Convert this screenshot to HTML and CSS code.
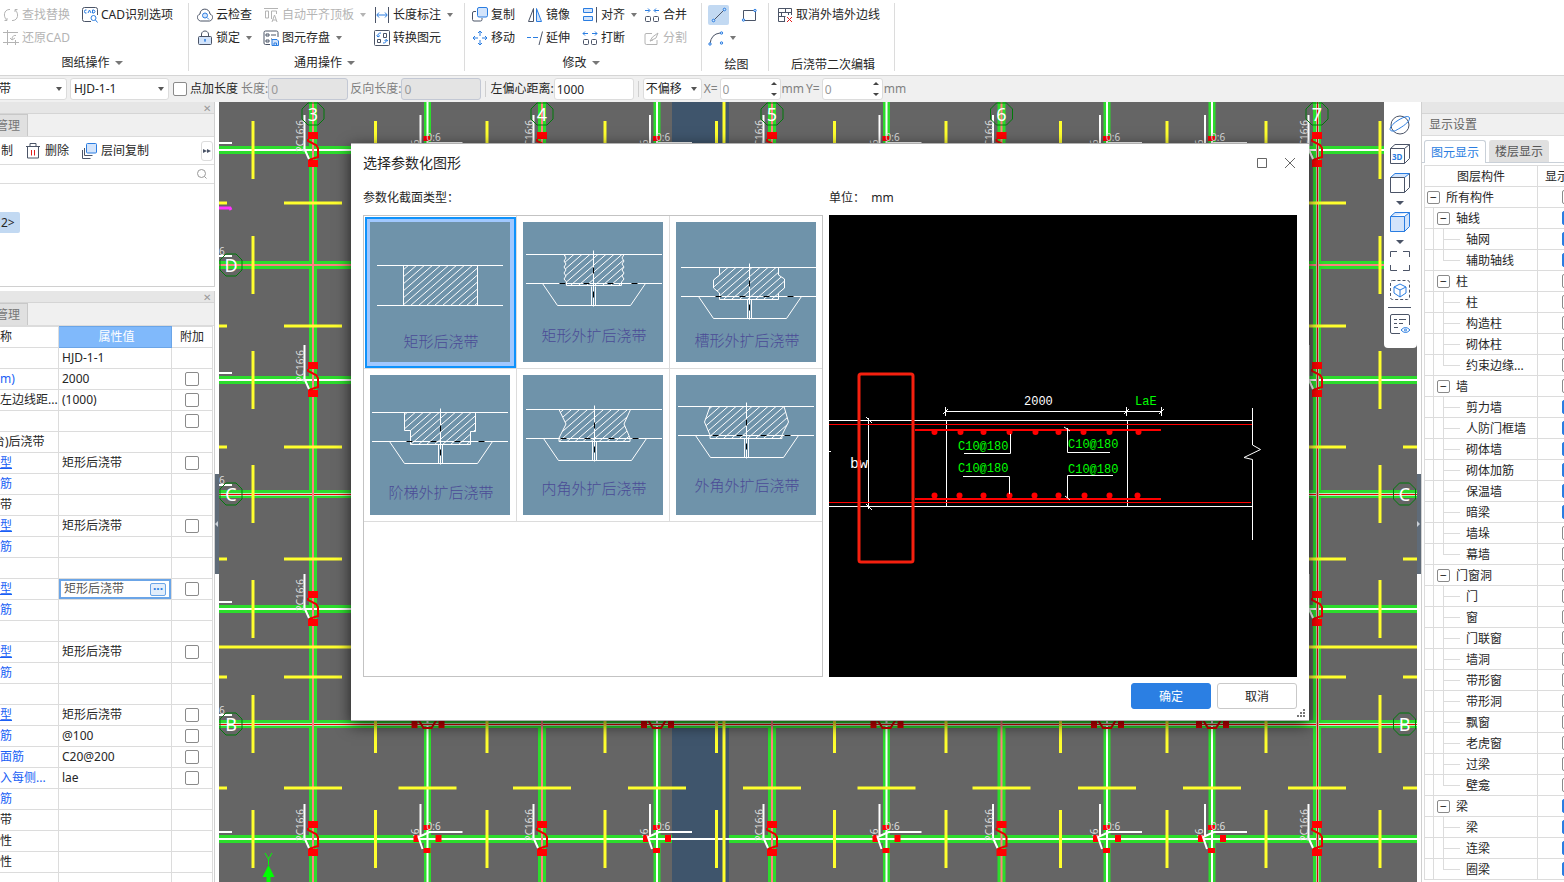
FILE: index.html
```
<!DOCTYPE html>
<html lang="zh-CN">
<head>
  <meta charset="UTF-8" />
  <meta name="viewport" content="width=device-width, initial-scale=1.0" />
  <title>选择参数化图形</title>
  <link rel="stylesheet" href="styles.css">
</head>
<body>
  <!-- icon sprite -->
  <svg class="sprite" aria-hidden="true">
    <symbol id="i-replace" viewBox="0 0 16 16"><path d="M6 2.500C1 3 0 9 3.500 13M1.500 13.500H4V11M10 13.500C15 13 16 7 12.500 3M14.500 2.500H12V5M6 2.500h1M9 13.500h1" /></symbol>
    <symbol id="i-restore" viewBox="0 0 16 16"><path d="M4.500 0v15M0 2.500h15M0 12.500h16M12.500 10v5M13 5.500C10 5 9 7 9 10M7 8l2 2 3-2" /></symbol>
    <symbol id="i-cad" viewBox="0 0 16 16"><path d="M9 14.500H2.500Q.5 14.500.5 12.500V2.500Q.5.5 2.500.5h11Q15.500.5 15.500 2.500V8" /><path class="b" d="M4.500 3H3Q2 4.500 3 6h1.500M6 6l1.500-3L9 6M10.500 3v3h1.500q2-1.500 0-3z" /><circle class="b" cx="11.500" cy="11" r="2.500" /><path class="b" d="M13.500 13l2 2.500" /></symbol>
    <symbol id="i-cloud" viewBox="0 0 16 16"><path d="M3.500 14C-.5 13-.5 8 3 7 3 .5 12.500.5 13 7c3.500 1 3.500 6-.5 7z" /><circle class="f" cx="8" cy="8.500" r="2.500" /><path class="b" d="M10 10.500l2 2" /></symbol>
    <symbol id="i-lock" viewBox="0 0 16 16"><rect x="1.500" y="6.500" width="13" height="8" rx="1" fill="#d3e4fb" /><path d="M4.500 6V4C5 0 11 0 11.500 4V6" /><path class="b" d="M8 9v3M7 10h2" /></symbol>
    <symbol id="i-align-top" viewBox="0 0 16 16"><path d="M1 1.500h14M2.500 4h3v7h-3zM8.500 12V4h5v3M9 15l2.500-7L14 15M10 13h3" /></symbol>
    <symbol id="i-save" viewBox="0 0 16 16"><path d="M7 14.500H2.500Q1 14.500 1 13V2.500Q1 1 2.500 1H13.500Q15 1 15 2.500V7M3 4h3v2H3zM3 10h3v2H3zM8 5h5M8 9h1" /><path class="f" d="M9 9.500h5l1.500 1.500v4.500H9zM11 15v-2h2.500v2" /></symbol>
    <symbol id="i-length" viewBox="0 0 16 16"><path d="M1.500 0v16M14.500 0v16" /><path class="b" d="M3 8h10M5 5.500L2.800 8 5 10.500M11 5.500L13.200 8 11 10.500" /></symbol>
    <symbol id="i-convert" viewBox="0 0 16 16"><rect x=".5" y=".5" width="15" height="15" rx="1" /><path d="M9.500 3.500h3v4h-3zM3.500 9.500h3v3h-3z" /><path class="b" d="M7 3Q3 3 4 7M2.500 5.500L4 7l2-1.500M9 13q4 0 3-3.500M10.500 11l1.500-1.500L14 11" /></symbol>
    <symbol id="i-copy" viewBox="0 0 16 16"><path d="M4 4.500H2Q.5 4.500.5 6v6.500Q.5 14 2 14H8.500Q10 14 10 12.500V11" /><rect class="f" x="5.500" y=".5" width="10" height="9.500" rx="1.500" /></symbol>
    <symbol id="i-mirror" viewBox="0 0 16 16"><path d="M6.500 1.500v13h-5z" /><path class="f" d="M9.500 1.500v13h5z" /></symbol>
    <symbol id="i-align" viewBox="0 0 16 16"><path class="f" d="M1.500 1.500h9v4h-9zM1.500 9.500h9v4h-9z" /><path d="M14.500 0v15.500" /></symbol>
    <symbol id="i-merge" viewBox="0 0 16 16"><rect x="1.500" y="9.500" width="5" height="5" rx="1" /><rect x="9.500" y="9.500" width="5" height="5" rx="1" /><path class="b" d="M1 3.500h4.500M4 1.500l2 2-2 2M15 3.500h-4.500M12 1.500l-2 2 2 2" /></symbol>
    <symbol id="i-break" viewBox="0 0 16 16"><rect x="1.500" y="9.500" width="5" height="5" rx="1" /><rect x="9.500" y="9.500" width="5" height="5" rx="1" /><path class="b" d="M6 3.500H1M3 1.500l-2 2 2 2M10 3.500h5M13 1.500l2 2-2 2" /></symbol>
    <symbol id="i-move" viewBox="0 0 16 16"><path class="b" d="M8 1v5M8 10v5M1 8h5M10 8h5M6 3l2-2 2 2M6 13l2 2 2-2M3 6L1 8l2 2M13 6l2 2-2 2" /></symbol>
    <symbol id="i-extend" viewBox="0 0 16 16"><path class="b" d="M0 7.500h4M6 7.500h5" /><path d="M15.500 1.500L12 15" /></symbol>
    <symbol id="i-split" viewBox="0 0 16 16"><path d="M8 3.500H2Q1 3.500 1 5v8q0 1.500 1.500 1.500H13V10M6 11l2.500-4L14 3 12 8zM6 11l3-1" /></symbol>
    <symbol id="i-line" viewBox="0 0 16 16"><path d="M3 13L13 3" /><circle class="f" cx="2.500" cy="13.500" r="1.300" /><circle class="f" cx="13.500" cy="2.500" r="1.300" /></symbol>
    <symbol id="i-rect" viewBox="0 0 16 16"><path d="M2.500 3.500h12v10h-12z" /><circle class="f" cx="14" cy="3.500" r="1.200" /><circle class="f" cx="2.500" cy="13" r="1.200" /></symbol>
    <symbol id="i-arc" viewBox="0 0 16 16"><path d="M2 14Q3 4 12 3" /><circle class="f" cx="2" cy="14" r="1.200" /><circle class="f" cx="13.500" cy="3" r="1.200" /><circle class="f" cx="13.500" cy="13" r="1.200" /></symbol>
    <symbol id="i-wall" viewBox="0 0 16 16"><path d="M8 14.500H1.500v-13h13V8M1.500 5.500h13M1.500 9.500h7M8.500 1.500v4M4.500 5.500v4M11.500 5.500V8M7.500 10v4" /><path class="r" d="M10 10l5 5M15 10l-5 5" /></symbol>
    <symbol id="i-trash" viewBox="0 0 16 16"><path d="M1 3.500h14M5 3.500V.5h6v3M2.500 4v11h11V4" /><path class="r" d="M6.500 7v5.500M9.500 7v5.500" /></symbol>
    <symbol id="i-layers" viewBox="0 0 16 16"><path d="M3.500 5v7.500h8M1.500 7v8.500h8" /><rect class="f" x="5.500" y=".5" width="10" height="9.500" rx="1" /></symbol>
    <symbol id="i-search" viewBox="0 0 12 12"><circle cx="5.500" cy="5.500" r="4" /><path d="M8.500 8.500l2 2" /></symbol>
    <symbol id="i-orbit" viewBox="0 0 22 22"><circle cx="11" cy="11" r="9" /><path class="b" d="M4 17C-2 17 2 11 8 7S20 1 20.500 4 16 11 11 14 6 17 4 17z" /></symbol>
    <symbol id="i-3d" viewBox="0 0 22 22"><path d="M1.500 5.500h14v15h-14zM1.500 5.500L6 1.500h14.500L15.500 5.500M20.500 1.500v14l-5 5" /><text x="3" y="17" class="cube-text">3D</text></symbol>
    <symbol id="i-cube" viewBox="0 0 22 22"><path class="f" d="M1.500 5.500L6 1.500h14.500L15.500 5.500z" /><path d="M1.500 5.500h14v15h-14zM20.500 1.500v14l-5 5" /></symbol>
    <symbol id="i-solid" viewBox="0 0 22 22"><path class="f" d="M1.500 5.500h14v15h-14zM1.500 5.500L6 1.500h14.500v14l-5 5v-15l5-4" /></symbol>
    <symbol id="i-frame" viewBox="0 0 22 22"><path d="M1.500 7V1.500H8M14 1.500h6.500V7M20.500 15v5.500H14M8 20.500H1.500V15" /></symbol>
    <symbol id="i-select3d" viewBox="0 0 22 22"><rect x="1.500" y="1.500" width="19" height="19" rx="2" stroke-dasharray="3 2" /><path class="b" d="M11 5l6 3v6l-6 4-6-4V8zM5 8l6 3 6-3M11 11v7" /></symbol>
    <symbol id="i-list" viewBox="0 0 22 22"><path d="M11 20.500H3Q1.500 20.500 1.500 19V3Q1.500 1.500 3 1.500h16q1.500 0 1.500 1.500v9M5 6.500h3M10 6.500h7M5 10.500h3M10 10.500h4M5 14.500h4" /><path class="b" d="M12 17q4.500-5 9 0-4.500 5-9 0z" /><circle class="b" cx="16.500" cy="17" r="1" /></symbol>
  </svg>

  <header class="ribbon">
    <section class="group g-drawing">
      <div class="tools">
        <button class="tool" disabled><svg class="icon"><use href="#i-replace" /></svg>查找替换</button>
        <button class="tool"><svg class="icon"><use href="#i-cad" /></svg>CAD识别选项</button>
        <button class="tool" disabled><svg class="icon"><use href="#i-restore" /></svg>还原CAD</button>
      </div>
      <button class="group-name caret">图纸操作</button>
    </section>
    <section class="group g-common">
      <div class="tools">
        <button class="tool"><svg class="icon"><use href="#i-cloud" /></svg>云检查</button>
        <button class="tool caret" disabled><svg class="icon"><use href="#i-align-top" /></svg>自动平齐顶板</button>
        <button class="tool caret"><svg class="icon"><use href="#i-length" /></svg>长度标注</button>
        <button class="tool caret"><svg class="icon"><use href="#i-lock" /></svg>锁定</button>
        <button class="tool caret"><svg class="icon"><use href="#i-save" /></svg>图元存盘</button>
        <button class="tool"><svg class="icon"><use href="#i-convert" /></svg>转换图元</button>
      </div>
      <button class="group-name caret">通用操作</button>
    </section>
    <section class="group g-modify">
      <div class="tools">
        <button class="tool"><svg class="icon"><use href="#i-copy" /></svg>复制</button>
        <button class="tool"><svg class="icon"><use href="#i-mirror" /></svg>镜像</button>
        <button class="tool caret"><svg class="icon"><use href="#i-align" /></svg>对齐</button>
        <button class="tool"><svg class="icon"><use href="#i-merge" /></svg>合并</button>
        <button class="tool"><svg class="icon"><use href="#i-move" /></svg>移动</button>
        <button class="tool"><svg class="icon"><use href="#i-extend" /></svg>延伸</button>
        <button class="tool"><svg class="icon"><use href="#i-break" /></svg>打断</button>
        <button class="tool" disabled><svg class="icon"><use href="#i-split" /></svg>分割</button>
      </div>
      <button class="group-name caret">修改</button>
    </section>
    <section class="group g-draw">
      <div class="tools">
        <button class="tool active" aria-label="直线"><svg class="icon"><use href="#i-line" /></svg></button>
        <button class="tool" aria-label="矩形"><svg class="icon"><use href="#i-rect" /></svg></button>
        <button class="tool caret" aria-label="弧线"><svg class="icon"><use href="#i-arc" /></svg></button>
      </div>
      <div class="group-name low">绘图</div>
    </section>
    <section class="group g-strip">
      <div class="tools">
        <button class="tool"><svg class="icon"><use href="#i-wall" /></svg>取消外墙外边线</button>
      </div>
      <div class="group-name low">后浇带二次编辑</div>
    </section>
  </header>

  <div class="options">
    <span class="combo first"><select aria-label="类型"><option>带</option></select></span>
    <span class="combo name"><select aria-label="构件"><option>HJD-1-1</option></select></span>
    <input type="checkbox" id="addLength" />
    <label for="addLength">点加长度</label>
    <label for="len" class="off">长度:</label>
    <input type="text" id="len" class="field" value="0" disabled />
    <label for="revLen" class="off">反向长度:</label>
    <input type="text" id="revLen" class="field" value="0" disabled />
    <i class="sep"></i>
    <label for="leftDist">左偏心距离:</label>
    <input type="text" id="leftDist" class="field" value="1000" />
    <i class="sep"></i>
    <span class="combo offset"><select aria-label="偏移"><option>不偏移</option></select></span>
    <label for="offX" class="off">X=</label>
    <span class="spin"><input type="text" id="offX" class="field" value="0" /></span>
    <span class="off">mm</span>
    <label for="offY" class="off">Y=</label>
    <span class="spin"><input type="text" id="offY" class="field" value="0" /></span>
    <span class="off">mm</span>
  </div>

  <main class="workspace">
    <aside class="left">
      <section class="panel components">
        <div class="panel-bar"><button class="close" aria-label="关闭">✕</button></div>
        <div class="panel-tabs"><button>管理</button></div>
        <div class="panel-tools">
          <button class="tool">制</button>
          <button class="tool"><svg class="icon"><use href="#i-trash" /></svg>删除</button>
          <button class="tool"><svg class="icon"><use href="#i-layers" /></svg>层间复制</button>
          <button class="more" aria-label="更多"></button>
        </div>
        <div class="search">
          <input type="text" aria-label="搜索" />
          <svg class="search-icon"><use href="#i-search" /></svg>
        </div>
        <div class="component-list"><span class="picked">2&gt;</span></div>
      </section>
      <section class="panel">
        <div class="panel-bar"><button class="close" aria-label="关闭">✕</button></div>
        <div class="panel-tabs"><button>管理</button></div>
        <table class="props">
          <thead><tr><th class="c-name">称</th><th class="c-value">属性值</th><th>附加</th></tr></thead>
          <tbody id="props"></tbody>
        </table>
      </section>
    </aside>
    <div class="splitter to-left"><button aria-label="收起左侧"></button></div>

    <div class="canvas">
      <svg id="plan" viewBox="219 102 1198 780" preserveAspectRatio="xMidYMin slice"></svg>
      <nav class="view-tools">
        <button aria-label="动态观察"><svg><use href="#i-orbit" /></svg></button>
        <button aria-label="三维"><svg><use href="#i-3d" /></svg></button>
        <button aria-label="俯视" class="drop"><svg><use href="#i-cube" /></svg></button>
        <button aria-label="实体" class="drop"><svg><use href="#i-solid" /></svg></button>
        <button aria-label="全屏"><svg><use href="#i-frame" /></svg></button>
        <button aria-label="局部三维"><svg><use href="#i-select3d" /></svg></button>
        <hr />
        <button aria-label="显示设置"><svg><use href="#i-list" /></svg></button>
      </nav>
    </div>

    <div class="splitter to-right"><button aria-label="收起右侧"></button></div>
    <aside class="right">
      <div class="panel-bar"></div>
      <h2>显示设置</h2>
      <div class="tabs">
        <button class="on">图元显示</button>
        <button>楼层显示</button>
      </div>
      <table class="tree">
        <thead><tr><th class="c-layer">图层构件</th><th class="c-show">显示</th></tr></thead>
        <tbody id="tree"></tbody>
      </table>
    </aside>
  </main>

  <div class="dialog" role="dialog" aria-labelledby="dialogTitle">
    <div class="dialog-title">
      <h1 id="dialogTitle">选择参数化图形</h1>
      <button class="max" aria-label="最大化"><svg viewBox="0 0 12 12"><path d="M1.500 1.500h9v9h-9z" /></svg></button>
      <button class="max" aria-label="关闭"><svg viewBox="0 0 12 12"><path d="M1 1l10 10M11 1L1 11" /></svg></button>
    </div>
    <div class="dialog-body">
      <div class="types">
        <p>参数化截面类型：</p>
        <div class="type-list">
          <div class="type-grid" id="types"></div>
        </div>
      </div>
      <div class="preview">
        <p>单位：&nbsp; mm</p>
        <svg viewBox="0 0 468 462" id="section">
          <g class="white">
            <path d="M0 205.500H423M0 291.500H423M117.500 205V292M298.500 205V292M116 196.500H333M116.500 192v9M297.500 192v9M332.500 192v9M114 199l5-5M295 199l5-5M330 199l5-5" />
            <path d="M39.500 203V294M37 202l6 6M37 289l6 6M0 236.500h2M423.500 193V230L431.500 234.500 415 242.500 423.500 244.500V325" />
          </g>
          <g class="red">
            <path d="M0 209.500H423M0 287.500H422" />
            <path d="M86 215H332M86 284H332" stroke-width="2" />
          </g>
          <g id="bars"></g>
          <g class="white">
            <path d="M135 238.500H181.500V219M134 261.500H180.500V279M281 237.500H238.500V213M284 260.500H238.500V283M235 212l6 4M236 281l5 4" />
          </g>
          <g class="dims">
            <text x="195" y="190" fill="#fff">2000</text>
            <text x="306" y="190">LaE</text>
            <text x="129" y="235">C10@180</text>
            <text x="129" y="257">C10@180</text>
            <text x="239" y="233">C10@180</text>
            <text x="239" y="258">C10@180</text>
            <text x="21" y="253" fill="#fff" class="bw">bw</text>
          </g>
          <rect x="30" y="159" width="54" height="188" rx="2" class="mark" />
        </svg>
      </div>
    </div>
    <div class="dialog-foot">
      <button class="ok">确定</button>
      <button>取消</button>
      <svg class="grip" viewBox="0 0 8 8"><path d="M6 0h2v2H6zM3 3h2v2H3zM6 3h2v2H6zM0 6h2v2H0zM3 6h2v2H3zM6 6h2v2H6z" /></svg>
    </div>
  </div>

  <script src="script.js"></script>
</body>
</html>
```
FILE: styles.css
```
:root {
  --line: #dcdcdc;
  --bar: #e6e6e6;
  --soft: #f0f0f0;
  --text: #262626;
  --blue: #2a7de1;
  --link: #1a5ff5;
}

* {
  box-sizing: border-box;
}

body {
  margin: 0;
  height: 100vh;
  overflow: hidden;
  display: flex;
  flex-direction: column;
  background: #fff;
  color: var(--text);
  font: 12px/16px "Noto Sans", "Noto Sans CJK SC", sans-serif;
}

button,
input,
select {
  font: inherit;
  color: inherit;
}

button {
  border: 0;
  padding: 0;
  background: none;
  white-space: nowrap;
}

h1,
h2,
p {
  margin: 0;
  font-weight: normal;
}

.sprite {
  display: none;
}

.icon,
.view-tools svg {
  fill: none;
  stroke: #4b5467;
}

.b {
  stroke: var(--blue);
}

.f {
  stroke: var(--blue);
  fill: #d3e4fb;
}

.r {
  stroke: #e02020;
}

.cube-text {
  font: bold 8px "Noto Sans", sans-serif;
  fill: var(--blue);
  stroke: none;
}

/* ribbon */
.ribbon {
  display: flex;
  flex: none;
  height: 75px;
  padding-top: 3px;
}

.group {
  display: flex;
  flex-direction: column;
  height: 68px;
  border-right: 1px solid var(--line);
}

.tools {
  display: grid;
  grid-auto-rows: 23px;
}

.tool {
  display: flex;
  align-items: center;
  gap: 3px;
}

.tool:disabled {
  color: #b4b4b4;
}

.tool:disabled .icon {
  stroke: #b4b4b4;
}

.icon {
  width: 16px;
  height: 16px;
}

.caret::after {
  content: "";
  margin-left: 3px;
  border: 3px solid transparent;
  border-top: 4px solid #777;
  border-bottom: 0;
}

.caret:disabled::after {
  border-top-color: #b4b4b4;
}

.group-name {
  display: flex;
  align-items: center;
  justify-content: center;
  flex: none;
  height: 28px;
}

.group-name.caret {
  padding-right: 4px;
}

.group-name.caret::after {
  margin-left: 5px;
  border-width: 4px 4px 0;
}

.group-name.low {
  height: 32px;
  padding-left: 3px;
}

.g-drawing {
  width: 189px;
}

.g-drawing .tools {
  padding-left: 3px;
  grid-template-columns: 79px auto;
}

.g-common {
  width: 276px;
}

.g-common .tools {
  padding-left: 8px;
  grid-template-columns: 66px 111px auto;
}

.g-modify {
  width: 237px;
}

.g-modify .tools {
  padding-left: 7px;
  grid-template-columns: 55px 55px 62px auto;
}

.g-draw {
  width: 67px;
}

.g-draw .tools {
  padding-left: 6px;
  grid-template-columns: 30px auto;
}

.g-draw .tool {
  width: 21px;
  justify-content: center;
}

.g-draw .tool.caret {
  width: 28px;
}

.g-draw .active {
  height: 20px;
  background: #c2d9f2;
  border-radius: 2px;
  align-self: center;
}

.g-strip {
  width: 126px;
}

.g-strip .tools {
  padding-left: 8px;
  grid-template-rows: 23px 23px;
}

/* options bar */
.options {
  display: flex;
  align-items: center;
  flex: none;
  height: 27px;
  background: var(--soft);
  border-top: 1px solid #d5d5d5;
}

.options label,
.options .off {
  white-space: nowrap;
}

.off {
  color: #808080;
}

.combo,
.spin {
  position: relative;
  display: flex;
}

.combo select {
  appearance: none;
  width: 100%;
  height: 22px;
  padding: 0 4px;
  border: 1px solid var(--line);
  border-radius: 3px;
  background: #fff;
}

.combo::after {
  content: "";
  position: absolute;
  right: 5px;
  top: 9px;
  border: 3px solid transparent;
  border-top: 4px solid #555;
  border-bottom: 0;
}

.combo.first {
  width: 76px;
  margin: 0 3px 0 -9px;
}

.combo.first select {
  padding-left: 7px;
}

.combo.name {
  width: 99px;
  margin-right: 4px;
}

.combo.name select {
  padding-left: 3px;
}

.combo.offset {
  width: 59px;
  margin-right: 2px;
}

.combo.offset select {
  padding-left: 2px;
}

input[type="checkbox"] {
  appearance: none;
  width: 14px;
  height: 14px;
  margin: 0;
  border: 1px solid #8a8a8a;
  border-radius: 2px;
  background: #fff;
  vertical-align: middle;
}

input[type="checkbox"]:checked {
  border-color: var(--blue);
  background: var(--blue);
}

.options > input[type="checkbox"] {
  margin-right: 3px;
}

.options label + .off {
  margin-left: 3px;
}

.field {
  width: 80px;
  height: 22px;
  padding: 0 2px;
  border: 1px solid var(--line);
  border-radius: 3px;
  background: #fff;
}

.field:disabled {
  color: #999;
  background: #e4e4e4;
  border-color: #c3c8d4;
}

.field + .off {
  margin-left: 2px;
}

.sep {
  width: 1px;
  height: 16px;
  margin: 0 4px;
  background: #cfcfcf;
}

.spin {
  margin: 0 1px 0 2px;
}

.spin .field {
  width: 61px;
  color: #999;
}

.spin::before,
.spin::after {
  content: "";
  position: absolute;
  right: 4px;
  border: 3px solid transparent;
}

.spin::before {
  top: 4px;
  border-bottom: 3px solid #444;
  border-top: 0;
}

.spin::after {
  bottom: 4px;
  border-top: 3px solid #444;
  border-bottom: 0;
}

.spin + .off {
  margin-right: 2px;
}

/* workspace */
.workspace {
  display: flex;
  flex: 1;
  min-height: 0;
}

.left {
  width: 215px;
  flex: none;
  overflow: hidden;
}

.panel {
  margin-left: -8px;
  border-right: 1px solid #d0d0d0;
}

.components {
  margin-bottom: 4px;
  border-bottom: 1px solid #d0d0d0;
}

.panel-bar {
  display: flex;
  justify-content: flex-end;
  height: 12px;
  background: var(--bar);
  border-bottom: 1px solid #d5d5d5;
}

.close {
  margin-right: 3px;
  font-size: 10px;
  line-height: 12px;
  color: #999;
}

.panel-tabs {
  display: flex;
  height: 23px;
  background: var(--soft);
  border-bottom: 1px solid var(--line);
}

.panel-tabs button {
  width: 36px;
  padding: 0 9px 0 3px;
  text-align: right;
  color: #777;
  background: #e0e0e0;
  border: 1px solid #c8c8c8;
  border-bottom: 0;
}

.panel-tools {
  display: flex;
  gap: 12px;
  height: 28px;
  padding: 1px 1px 0 9px;
  border-bottom: 1px solid var(--line);
}

.panel-tools .tool {
  gap: 4px;
}

.more {
  align-self: center;
  display: flex;
  align-items: center;
  justify-content: center;
  width: 12px;
  height: 20px;
  margin-left: auto;
  border: 1px solid var(--line);
  border-radius: 3px;
}

.more::before,
.more::after {
  content: "";
  flex: none;
  border: 2px solid transparent;
  border-left: 4px solid #4b5467;
  border-right: 0;
}

.search {
  display: flex;
  align-items: center;
  height: 19px;
  padding-right: 6px;
  border-bottom: 1px solid var(--line);
}

.search input {
  flex: 1;
  height: 16px;
  border: 0;
}

.search-icon {
  width: 12px;
  height: 12px;
  fill: none;
  stroke: #999;
}

.component-list {
  height: 102px;
  padding-top: 28px;
}

.picked {
  display: inline-block;
  height: 21px;
  padding: 3px 5px 0 9px;
  background: #c2d9f2;
  border-radius: 2px;
}

table {
  border-collapse: collapse;
  table-layout: fixed;
}

th {
  font-weight: normal;
}

.props {
  width: 221px;
}

.props th,
.props td {
  height: 21px;
  padding: 0 0 0 3px;
  border: 1px solid var(--line);
  white-space: nowrap;
}

.props .c-name {
  width: 66px;
  padding-left: 7px;
  text-align: left;
}

.props .cut {
  padding-left: 0;
}

.props .c-value {
  width: 113px;
}

.props th.c-value {
  color: #fff;
  background: #80b9fb;
  border-color: #6ba5e7;
}

.props td:last-child,
.props th:last-child {
  padding: 0;
  text-align: center;
}

.props input {
  display: block;
  margin: auto;
}

.props .blue,
.props a {
  color: var(--link);
}

.editor {
  display: flex;
  align-items: center;
  height: 20px;
  margin: 0 0 0 -3px;
  padding: 0 3px;
  color: #555;
  border: 2px solid #6ba5e7;
}

.editor button {
  width: 16px;
  height: 13px;
  margin-left: auto;
  color: var(--blue);
  background: #e3eefb;
  border: 1px solid #6ba5e7;
  border-radius: 2px;
  font-weight: bold;
  line-height: 8px;
}

.splitter {
  flex: none;
  width: 4px;
  padding-top: 372px;
}

.splitter button {
  display: flex;
  align-items: center;
  width: 4px;
  height: 100px;
  background: #5f6b78;
}

.splitter button::before {
  content: "";
  border: 3px solid transparent;
}

.to-left button::before {
  border-right: 3px solid #c9d0d8;
  border-left: 0;
}

.to-right button::before {
  border-left: 3px solid #c9d0d8;
  border-right: 0;
}

/* plan view */
.canvas {
  position: relative;
  flex: 1;
  min-width: 0;
  background: #656565;
}

#plan {
  display: block;
  width: 100%;
  height: 100%;
}

#plan .tag {
  font: 10px "Noto Sans", sans-serif;
  fill: #ddd;
}

#plan .axis-name {
  font: 18px "Noto Sans", sans-serif;
  fill: #fff;
  text-anchor: middle;
}

.view-tools {
  position: absolute;
  top: 0;
  right: 0;
  display: flex;
  flex-direction: column;
  align-items: center;
  width: 33px;
  padding: 9px 2px 9px 0;
  background: #fff;
  border-radius: 0 0 4px 4px;
}

.view-tools button {
  display: flex;
  flex-direction: column;
  align-items: center;
  height: 29px;
  padding-top: 3px;
}

.view-tools svg {
  flex: none;
  width: 22px;
  height: 22px;
}

.view-tools .drop {
  height: 39px;
}

.view-tools .drop::after {
  content: "";
  margin-top: 7px;
  border: 4px solid transparent;
  border-top: 4px solid #4b5467;
  border-bottom: 0;
}

.view-tools hr {
  width: 23px;
  margin: 2px 0;
  border: 0;
  border-top: 1px solid #4b5467;
}

/* display settings */
.right {
  flex: none;
  width: 143px;
  overflow: hidden;
  border-left: 1px solid #d0d0d0;
}

.right h2 {
  height: 22px;
  padding: 3px 7px;
  font-size: 12px;
  color: #666;
  background: var(--soft);
  border-bottom: 1px solid var(--line);
}

.tabs {
  display: flex;
  gap: 3px;
  height: 27px;
  padding: 4px 2px 0;
  border-bottom: 1px solid #c9d0d8;
}

.tabs button {
  width: 60px;
  height: 22px;
  padding-top: 2px;
  color: #555;
  background: #e0e0e0;
  border-radius: 3px 3px 0 0;
}

.tabs .on {
  width: 62px;
  height: 23px;
  padding-top: 1px;
  color: var(--blue);
  background: #fff;
  border: 1px solid #c9d0d8;
  border-bottom: 0;
}

.tree {
  width: 180px;
  margin: 2px 0 0 2px;
}

.tree th,
.tree td {
  height: 21px;
  padding: 0;
  border: 1px solid var(--line);
  white-space: nowrap;
}

.tree th {
  padding-top: 1px;
}

.tree .c-layer {
  width: 113px;
}

.tree .c-show {
  padding-left: 7px;
  text-align: left;
}

.tree td:last-child input {
  display: block;
  margin-left: 24px;
}

.node {
  display: flex;
  align-items: center;
  height: 20px;
  padding-left: 2px;
  line-height: 18px;
}

.node-name {
  padding-top: 1px;
}

.rail {
  align-self: stretch;
  width: 10px;
  margin-left: 6px;
  border-left: 1px solid var(--line);
}

.branch {
  align-self: stretch;
  position: relative;
  width: 23px;
  border-left: 1px solid var(--line);
}

.branch::before {
  content: "";
  position: absolute;
  left: 0;
  top: 10px;
  width: 16px;
  border-top: 1px solid var(--line);
}

.branch.end {
  align-self: flex-start;
  height: 11px;
}

.fold {
  flex: none;
  width: 13px;
  height: 13px;
  margin-right: 6px;
  border: 1px solid #8a8a8a;
  border-radius: 2px;
  line-height: 9px;
}

.rail + .fold {
  margin-left: -6px;
}

/* dialog */
.dialog {
  position: absolute;
  left: 351px;
  top: 143px;
  display: flex;
  flex-direction: column;
  padding: 0 12px 11px;
  background: #fff;
  border: 1px solid #b0b0b0;
  border-width: 1px 0;
  box-shadow: 0 4px 14px rgba(0, 0, 0, 0.7);
}

.dialog-title {
  display: flex;
  align-items: center;
  gap: 16px;
  height: 38px;
  padding-right: 1px;
}

.dialog-title h1 {
  flex: 1;
  font-size: 14px;
}

.max {
  display: flex;
}

.max svg {
  width: 12px;
  height: 12px;
  fill: none;
  stroke: #666;
}

.dialog-body {
  display: flex;
  gap: 6px;
}

.dialog-body p {
  height: 33px;
  padding-top: 8px;
}

.type-list {
  width: 460px;
  height: 462px;
  border: 1px solid #c3c3c3;
}

.type-grid {
  display: grid;
  grid-template-columns: 153px 153px 152px;
  grid-auto-rows: 153px;
}

.type-cell {
  padding: 1px 0 0 1px;
  border-right: 1px solid var(--line);
  border-bottom: 1px solid var(--line);
}

.type-cell:nth-child(3n) {
  border-right: 0;
}

.type-cell button {
  display: block;
  padding: 3px;
  border: 2px solid transparent;
}

.type-cell button.selected {
  padding-right: 4px;
  padding-bottom: 4px;
  background: #a0c8ff;
  border-color: #0f92fb;
}

.type-cell svg {
  display: block;
  width: 140px;
  height: 140px;
  background: #6f93aa;
  fill: none;
  stroke: #fff;
}

.type-cell text {
  font: 300 15px "Noto Sans CJK SC", sans-serif;
  text-anchor: middle;
  fill: #4b4b96;
  stroke: none;
}

#section {
  display: block;
  width: 468px;
  height: 462px;
  background: #000;
}

.white {
  fill: none;
  stroke: #fff;
}

.red {
  stroke: #f00;
}

#bars {
  fill: #f00;
}

.dims {
  font: 12px "Liberation Mono", monospace;
  fill: #0f0;
}

.bw {
  font-size: 15px;
}

.mark {
  fill: none;
  stroke: #f5200f;
  stroke-width: 3;
}

.dialog-foot {
  position: relative;
  display: flex;
  justify-content: flex-end;
  gap: 6px;
  padding-top: 6px;
}

.dialog-foot button {
  width: 80px;
  height: 26px;
  padding-top: 1px;
  border: 1px solid #c9c9c9;
  border-radius: 3px;
}

.dialog-foot .ok {
  color: #fff;
  background: #2b7fe3;
  border-color: #2b7fe3;
}

.grip {
  position: absolute;
  right: -8px;
  bottom: -8px;
  width: 8px;
  height: 8px;
  fill: #777;
}
```
FILE: script.js
```
// property rows: [name, value, has checkbox, style]
const props = [
  ["", "HJD-1-1", 0],
  ["m)", "2000", 1, "blue"],
  ["左边线距...", "(1000)", 1],
  ["", "", 1],
  ["台)后浇带", "", 0, "cut"],
  ["型", "矩形后浇带", 1, "link"],
  ["筋", "", 0, "blue"],
  ["带", "", 0],
  ["型", "矩形后浇带", 1, "link"],
  ["筋", "", 0, "blue"],
  ["", "", 0],
  ["型", "矩形后浇带", 1, "edit"],
  ["筋", "", 0, "blue"],
  ["", "", 0],
  ["型", "矩形后浇带", 1, "link"],
  ["筋", "", 0, "blue"],
  ["", "", 0],
  ["型", "矩形后浇带", 1, "link"],
  ["筋", "@100", 1, "blue"],
  ["面筋", "C20@200", 1, "blue"],
  ["入每侧...", "lae", 1, "blue"],
  ["筋", "", 0, "blue"],
  ["带", "", 0],
  ["性", "", 0],
  ["性", "", 0],
  ["", "", 0]
];

document.getElementById("props").innerHTML = props.map(([name, value, box, style]) => {
  const isLink = style === "link" || style === "edit";
  const label = isLink ? `<a href="#">${name}</a>` : name;
  const cell = style === "edit" ? `<div class="editor">${value}<button>···</button></div>` : value;
  const check = box ? `<input type="checkbox" aria-label="附加 ${name}">` : "";
  return `<tr><td class="c-name ${style || ""}">${label}</td><td>${cell}</td><td>${check}</td></tr>`;
}).join("");

// layer tree: [group, items], a "+" marks a visible layer
const layers = [
  ["+轴线", ["+轴网", "+辅助轴线"]],
  ["柱", ["柱", "构造柱", "砌体柱", "约束边缘..."]],
  ["墙", ["+剪力墙", "+人防门框墙", "+砌体墙", "+砌体加筋", "+保温墙", "+暗梁", "墙垛", "幕墙"]],
  ["门窗洞", ["门", "窗", "门联窗", "墙洞", "带形窗", "带形洞", "飘窗", "老虎窗", "过梁", "壁龛"]],
  ["+梁", ["+梁", "+连梁", "+圈梁"]]
];

function treeRow(name, before) {
  const on = name[0] === "+";
  const text = name.replace("+", "");
  return `<tr><td><div class="node">${before}<span class="node-name">${text}</span></div></td>
    <td><input type="checkbox" aria-label="${text}" ${on ? "checked" : ""}></td></tr>`;
}

const fold = `<button class="fold" aria-label="折叠">−</button>`;
let tree = treeRow("所有构件", fold);
layers.forEach(([group, items]) => {
  tree += treeRow(group, `<span class="rail"></span>` + fold);
  items.forEach((item, i) => {
    const end = i === items.length - 1 ? " end" : "";
    tree += treeRow(item, `<span class="rail"></span><span class="branch${end}"></span>`);
  });
});
document.getElementById("tree").innerHTML = tree;

// section thumbnails
const types = [
  { name: "矩形后浇带", top: 43.5, left: 7, low: 83.5, labelY: 125, block: "33.5,43.5 33.5,83.5 107.5,83.5 107.5,43.5" },
  { name: "矩形外扩后浇带", top: 32.5, left: 3, low: 61.5, mid: 70.5, labelY: 119, block: "41,32.5 43,36 41,39 43,42 41,45 43,48 41,51 43,54 41,57 43.5,60 43.5,63.5 98.5,63.5 98.5,60 101,57 99,54 101,51 99,48 101,45 99,42 101,39 99,36 101,32.5" },
  { name: "槽形外扩后浇带", top: 45.5, left: 5, low: 74.5, mid: 73.5, labelY: 124, block: "43.5,45.5 43.5,53 37.5,58 37.5,66 43.5,71 43.5,77.5 102.5,77.5 102.5,71 108.5,66 108.5,57 102.5,53 102.5,45.5" },
  { name: "阶梯外扩后浇带", top: 37.5, left: 2, low: 66.5, mid: 70.5, labelY: 123, block: "34.5,37.5 34.5,55.5 40.5,55.5 40.5,69.5 100.5,69.5 100.5,56.5 105.5,56.5 105.5,37.5" },
  { name: "内角外扩后浇带", top: 34.5, left: 3, low: 63.5, mid: 71.5, labelY: 119, block: "36,34.5 43,49 36,63 36,66.5 107,66.5 107,63 101,49 107.5,34.5" },
  { name: "外角外扩后浇带", top: 31.5, left: 2, low: 60.5, mid: 70.5, labelY: 116, block: "34,31.5 28.5,47 34,60 34,63.5 106,63.5 106,60 112.5,47 108,31.5" }
];

document.getElementById("types").innerHTML = types.map((t, i) => {
  const right = i === 0 ? 133 : t.left + 136;
  let art = `<path d="M${t.left} ${t.top}H${right}M${t.left} ${t.low}H${right}"/>`;
  if (t.mid) {
    const m = t.mid, y = t.low, b = y + 22;
    art += `<path d="M${m - 51} ${y}L${m - 36} ${b}H${m + 37}L${m + 52} ${y}M${m - 2} ${y + 3}V${b}M${m + 2} ${y + 3}V${b}M${m} ${t.top - 4}V${b + 1}"/>
      <path stroke="#000" d="M${m - 34} ${y}h6M${m - 10} ${y}h6M${m + 14} ${y}h6M${m + 38} ${y}h6M${m} ${y - 16}v6M${m} ${y + 8}v6"/>`;
  }
  return `<div class="type-cell"><button class="${i === 0 ? "selected" : ""}"><svg viewBox="0 0 140 140">
    <defs><pattern id="hatch${i}" width="8" height="7" patternUnits="userSpaceOnUse"><path d="M-2 8.750L10 -1.750M-2 1.750L2 -1.750M6 8.750L10 5.250"/></pattern></defs>
    <polygon points="${t.block}" fill="url(#hatch${i})"/>${art}
    <text x="71" y="${t.labelY}">${t.name}</text></svg></button></div>`;
}).join("");

// rebar dots in the section preview
const dot = (x, y) => `<circle cx="${x}" cy="${y}" r="3"/>`;
document.getElementById("bars").innerHTML =
  [105.5, 131.5, 154.5, 180.5, 206.5, 229.5, 254.5, 280.5, 309.5].map(x => dot(x, 217)).join("") +
  [105.5, 130.5, 154.5, 180.5, 205.5, 229.5, 255.5, 280.5, 308.5].map(x => dot(x, 280.5)).join("");

// floor plan
const axesX = [[313, "3"], [542, "4"], [772, "5"], [1001.5, "6"], [1317, "7"]];
const beamsX = [427.5, 657, 886.5, 1107, 1212];
const axesY = [[265, "D"], [494, "C"], [724, "B"]];
const beamsY = [150, 380, 609, 839];
const barsX = [253, 375.5, 487, 605, 716.5, 834.5, 946, 1060.5, 1167, 1266, 1380];
const barsY = [203, 326, 447, 559, 677, 788];

const line = (x1, y1, x2, y2, color, w) =>
  `<line x1="${x1}" y1="${y1}" x2="${x2}" y2="${y2}" stroke="${color}" stroke-width="${w}"/>`;
const green = "#2cdc2c";
const yellow = "#ffff2e";
let plan = "";

axesY.forEach(([y]) => plan += line(219, y, 1417, y, green, 8));
beamsY.forEach(y => plan += line(219, y, 1417, y, green, 8));
axesX.forEach(([x]) => plan += line(x, 102, x, 882, green, 8));
beamsX.forEach(x => plan += line(x, 102, x, 882, green, 7));
plan += `<rect x="672" y="102" width="57" height="618" fill="#3f556c"/><rect x="672" y="728" width="57" height="154" fill="#3f556c"/>`;
beamsY.forEach(y => plan += line(219, y, 1417, y, "#fff", 2));
beamsX.forEach(x => plan += line(x, 102, x, 882, "#fff", 2));
axesY.forEach(([y, n]) => {
  plan += n === "D" ? line(219, y, 1417, y, "#ff8080", 2)
    : line(219, y + 0.5, 1417, y + 0.5, "#c0f0c0", 3) + line(219, y + 0.5, 1417, y + 0.5, "#f00000", 1);
});
axesX.forEach(([x, n]) => {
  plan += n === "7" ? line(x + 0.5, 102, x + 0.5, 882, "#b8c8a8", 3) + line(x + 0.5, 102, x + 0.5, 882, "#e00000", 1)
    : line(x, 102, x, 882, "#ff8080", 2);
});

barsX.forEach(x => {
  [150, 265, 380, 494, 609, 724, 839].forEach(y => plan += line(x, y - 29, x, y + 29, yellow, 3));
});
[198, ...axesX.map(a => a[0]), ...beamsX, 1432].forEach(x => {
  barsY.forEach(y => plan += line(x - 29, y, x + 29, y, yellow, 3));
});
plan += line(219, 647, 1417, 647, yellow, 3) + line(724, 102, 724, 882, yellow, 3);

// stirrup marks on the axes
beamsY.forEach(y => {
  plan += line(219, y - 7, 232, y - 7, "#fff", 2);
  axesX.forEach(([x]) => {
    plan += `<g transform="translate(${x} ${y})">
      <path d="M-5 -18H5V-11H-5zM-5 10H5V17H-5z" fill="#f00"/>
      <path d="M-5 -11V-9L3 -5 5 -2V7L-4 10" fill="none" stroke="#e80000" stroke-width="2"/>
      <path d="M-8.500 -35V-1L-4 9" fill="none" stroke="#fff" stroke-width="2"/>
      <text class="tag" transform="translate(-9 2) rotate(-90)">2C16:6</text></g>`;
  });
  beamsX.forEach(x => {
    plan += `<g transform="translate(${x} ${y})">
      <path d="M-4 -14h7v5h-7zM-14 -4h6v7h-6zM8 -4h6v7H8zM-4 9h7v5h-7z" fill="#f00"/>
      <path d="M-7 -35V-3M-5 10L-9 -2 2 -7H35" fill="none" stroke="#fff" stroke-width="2"/>
      <text class="tag" x="-1" y="-9">0:6</text>
      <text class="tag" transform="translate(-9 -2) rotate(-90)">:6</text></g>`;
  });
});
axesY.forEach(([y, n]) => {
  plan += line(219, y - 9, 232, y - 9, "#fff", 2) + `<text class="tag" x="219" y="${y - 10}">6</text>`;
  if (n === "B") {
    beamsX.forEach(x => plan += `<g transform="translate(${x} ${y})"><path d="M-16 -4h6v8h-6zM11 -4h6v8h-6z" fill="#e00000"/><path d="M-9 -4L-4 4H4L9 -4" fill="none" stroke="#e00000" stroke-width="2"/></g>`);
  }
});
plan += `<path d="M219 208h11l1 2" fill="none" stroke="#f3f" stroke-width="3"/>`;

// axis bubbles
const bubble = (x, y, n) => `<polygon points="-5,-11 5,-11 11,-5 11,5 5,11 -5,11 -11,5 -11,-5" transform="translate(${x} ${y})" fill="none" stroke="#007a0a"/>
  <text class="axis-name" x="${x}" y="${y + 7}">${n}</text>`;
axesX.forEach(([x, n]) => plan += bubble(x, 114, n));
axesY.forEach(([y, n]) => plan += bubble(231, y, n) + (n === "D" ? "" : bubble(1404.5, y, n)));

// ucs arrow
plan += `<path d="M265 853l3.500 6 3.500-6M268.500 859v6" fill="none" stroke="#0f0"/><path d="M268.500 865l6 12h-4v6h-4v-6h-4z" fill="#0f0"/>`;

document.getElementById("plan").innerHTML = plan;
```
